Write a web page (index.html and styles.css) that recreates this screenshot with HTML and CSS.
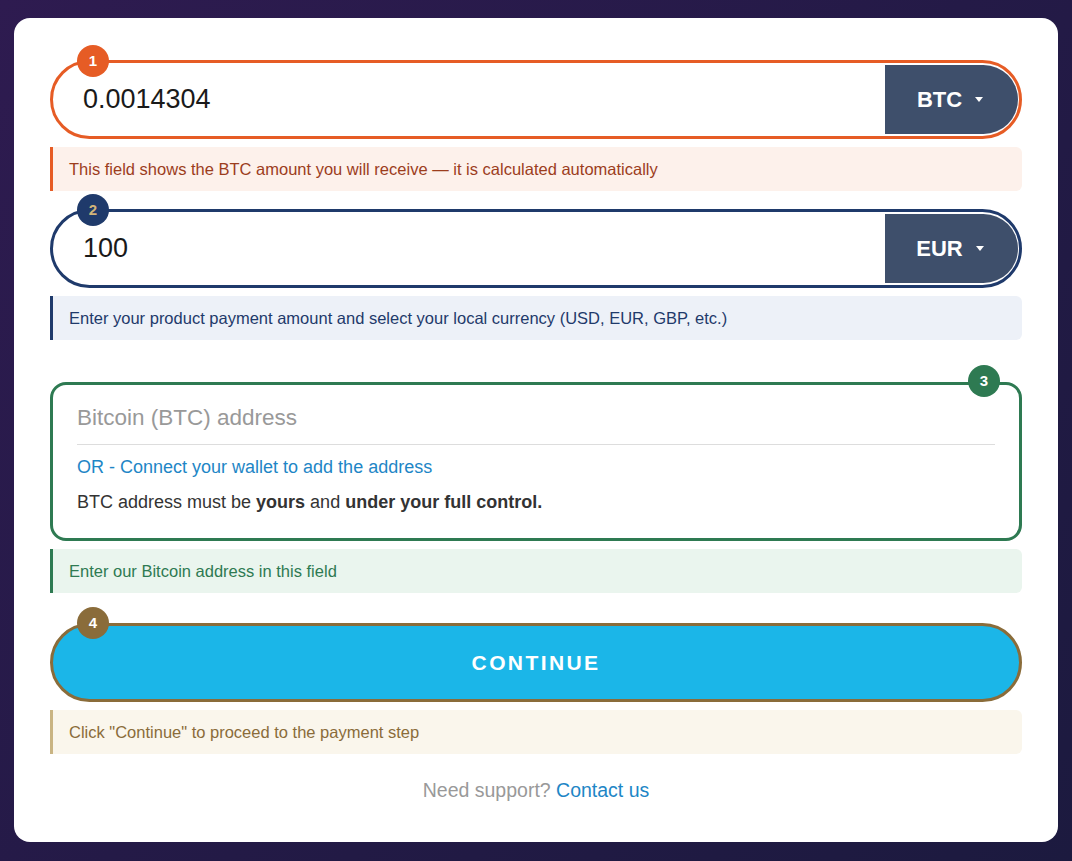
FILE: index.html
```html
<!DOCTYPE html>
<html lang="en">
<head>
  <meta charset="UTF-8" />
  <meta name="viewport" content="width=device-width, initial-scale=1.0" />
  <title>Buy Bitcoin</title>
  <link rel="stylesheet" href="styles.css">
</head>
<body>
  <main class="panel">
    <div class="step">
      <div class="field field-btc">
        <span class="badge badge-1">1</span>
        <input type="text" class="amount" value="0.0014304">
        <button class="currency">BTC <span class="caret"></span></button>
      </div>
      <div class="hint hint-btc">This field shows the BTC amount you will receive — it is calculated automatically</div>
    </div>

    <div class="step">
      <div class="field field-fiat">
        <span class="badge badge-2">2</span>
        <input type="text" class="amount" value="100">
        <button class="currency">EUR <span class="caret"></span></button>
      </div>
      <div class="hint hint-fiat">Enter your product payment amount and select your local currency (USD, EUR, GBP, etc.)</div>
    </div>

    <div class="step step-address">
      <div class="address-box">
        <span class="badge badge-3">3</span>
        <input type="text" class="address" placeholder="Bitcoin (BTC) address">
        <a href="#" class="wallet-link">OR - Connect your wallet to add the address</a>
        <p class="address-note">BTC address must be <b>yours</b> and <b>under your full control.</b></p>
      </div>
      <div class="hint hint-address">Enter our Bitcoin address in this field</div>
    </div>

    <div class="step step-continue">
      <button class="continue">
        <span class="badge badge-4">4</span>
        CONTINUE
      </button>
      <div class="hint hint-continue">Click "Continue" to proceed to the payment step</div>
    </div>

    <p class="support">Need support? <a href="#">Contact us</a></p>
  </main>
</body>
</html>
```

FILE: styles.css
```css
body {
  margin: 0;
  padding: 18px 14px;
  min-height: 861px;
  box-sizing: border-box;
  font-family: 'Liberation Sans', Arial, sans-serif;
  background: linear-gradient(135deg, #2e1b50 0%, #241a47 50%, #1c1a3f 100%);
  color: #333;
}
.panel {
  background: #fff;
  border-radius: 16px;
  padding: 42px 36px 40px;
}
.step {
  margin-bottom: 18px;
}
.step-address {
  margin-top: 42px;
  margin-bottom: 30px;
}
.field {
  position: relative;
  display: flex;
  height: 69px;
  padding: 2px 1px 2px 2px;
  border: 3px solid;
  border-radius: 40px;
  background: #fff;
}
.field-btc {
  border-color: #e65c25;
}
.field-fiat {
  border-color: #1f3a6b;
}
.amount {
  flex: 1;
  min-width: 0;
  border: none;
  outline: none;
  background: transparent;
  padding: 0 0 0 28px;
  font-family: inherit;
  font-size: 27px;
  color: #1a1a1a;
}
.currency {
  width: 133px;
  border: none;
  border-radius: 0 36px 36px 0;
  background: #3e4f6b;
  color: #fff;
  font-family: inherit;
  font-size: 22px;
  font-weight: bold;
  display: flex;
  align-items: center;
  justify-content: center;
  gap: 13px;
  padding: 0 3px 0 0;
  cursor: pointer;
}
.caret {
  width: 0;
  height: 0;
  border-left: 4.5px solid transparent;
  border-right: 4.5px solid transparent;
  border-top: 5px solid #fff;
}
.badge {
  position: absolute;
  top: -18px;
  left: 24px;
  width: 32px;
  height: 32px;
  border-radius: 50%;
  color: #fff;
  font-size: 15px;
  font-weight: bold;
  line-height: 32px;
  text-align: center;
  letter-spacing: 0;
}
.badge-1 {
  background: #e65c25;
}
.badge-2 {
  background: #1f3a6b;
  color: #d2b479;
}
.badge-3 {
  background: #2e7a52;
  left: auto;
  right: 19px;
  top: -20px;
}
.badge-4 {
  background: #8a6c3a;
  top: -19px;
}
.hint {
  margin-top: 8px;
  padding: 12px 16px;
  line-height: 20px;
  font-size: 16.5px;
  border-left: 3px solid;
  border-radius: 0 6px 6px 0;
}
.hint-btc {
  background: #fdf1eb;
  border-color: #e65c25;
  color: #9c3d1d;
}
.hint-fiat {
  background: #edf1f8;
  border-color: #1f3a6b;
  color: #1f3a6b;
}
.hint-address {
  background: #eaf5ee;
  border-color: #2e7a52;
  color: #2e7a52;
}
.hint-continue {
  background: #faf6ec;
  border-color: #c9b483;
  color: #8a6c3a;
}
.address-box {
  position: relative;
  border: 3px solid #2e7a52;
  border-radius: 16px;
  padding: 7px 24px 24px;
}
.address {
  display: block;
  width: 100%;
  box-sizing: border-box;
  height: 53px;
  border: none;
  border-bottom: 1px solid #ddd;
  outline: none;
  padding: 0;
  font-family: inherit;
  font-size: 22.5px;
  color: #333;
}
.address::placeholder {
  color: #999;
}
.wallet-link {
  display: block;
  margin-top: 10px;
  line-height: 24px;
  font-size: 18px;
  color: #1e86c6;
  text-decoration: none;
}
.address-note {
  margin: 11px 0 0;
  line-height: 24px;
  font-size: 18px;
  color: #333;
}
.continue {
  position: relative;
  display: block;
  width: 100%;
  height: 79px;
  border: 3px solid #8a6c3a;
  border-radius: 40px;
  background: #1bb6e8;
  color: #fff;
  font-family: inherit;
  font-size: 21px;
  font-weight: bold;
  letter-spacing: 2.4px;
  cursor: pointer;
}
.support {
  margin: 24px 0 0;
  text-align: center;
  font-size: 19.5px;
  line-height: 24px;
  color: #999;
}
.support a {
  color: #1e86c6;
  text-decoration: none;
}
```
